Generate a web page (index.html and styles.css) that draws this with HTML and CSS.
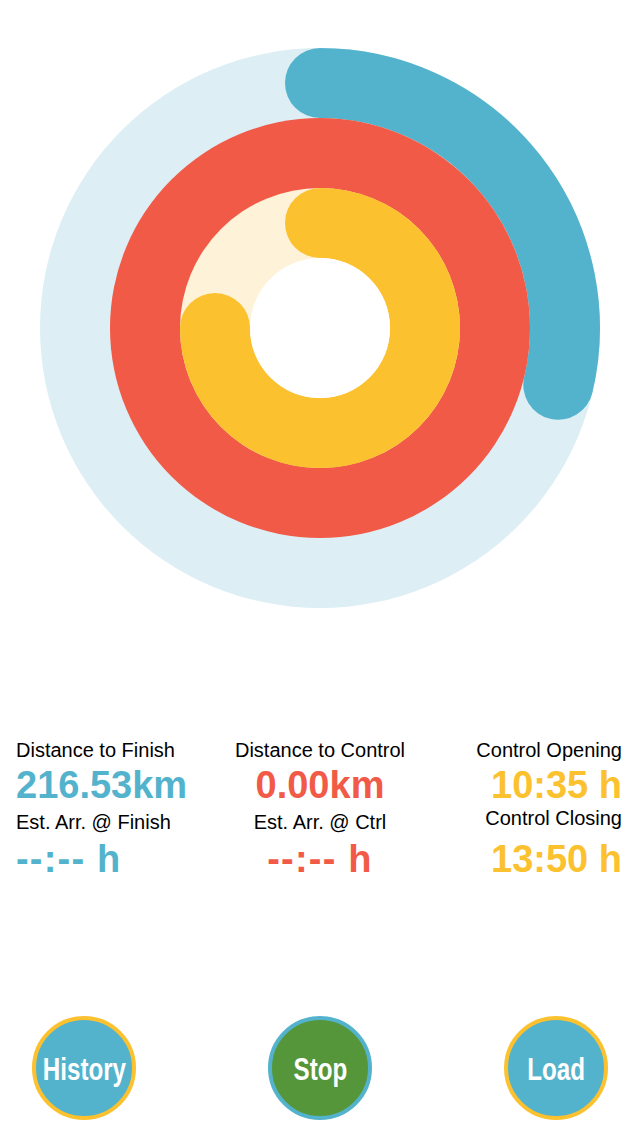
FILE: index.html
```html
<!DOCTYPE html>
<html>
<head>
<meta charset="utf-8">
<link rel="stylesheet" href="styles.css">
</head>
<body>
<div class="screen">
  <svg class="rings" width="640" height="656" viewBox="0 0 640 656">
    <circle cx="320" cy="328" r="280" fill="#DDEFF5"/>
    <path d="M 320 83 A 245 245 0 0 1 558.3 384.8" fill="none" stroke="#54B3CC" stroke-width="70" stroke-linecap="round"/>
    <circle cx="320" cy="328" r="210" fill="#F25A48"/>
    <circle cx="320" cy="328" r="140" fill="#FEF2D8"/>
    <path d="M 320 223 A 105 105 0 1 1 215 328" fill="none" stroke="#FBC12F" stroke-width="70" stroke-linecap="round"/>
    <circle cx="320" cy="328" r="70" fill="#FFFFFF"/>
  </svg>

  <div class="stats">
    <div class="col col-left">
      <div class="label">Distance to Finish</div>
      <div class="value blue">216.53km</div>
      <div class="label label2">Est. Arr. @ Finish</div>
      <div class="value value2 dashes blue">--:-- h</div>
    </div>
    <div class="col col-mid">
      <div class="label">Distance to Control</div>
      <div class="value red">0.00km</div>
      <div class="label label2">Est. Arr. @ Ctrl</div>
      <div class="value value2 dashes red">--:-- h</div>
    </div>
    <div class="col col-right">
      <div class="label">Control Opening</div>
      <div class="value yellow">10:35 h</div>
      <div class="label label2 label2-up">Control Closing</div>
      <div class="value value2 value2-down yellow">13:50 h</div>
    </div>
  </div>

  <div class="buttons">
    <div class="btn btn-blue ring-yellow"><span>History</span></div>
    <div class="btn btn-green ring-blue"><span>Stop</span></div>
    <div class="btn btn-blue ring-yellow"><span>Load</span></div>
  </div>
</div>
</body>
</html>
```

FILE: styles.css
```css
html, body {
  margin: 0;
  padding: 0;
  background: #ffffff;
}

.screen {
  width: 640px;
  height: 1136px;
  display: flex;
  flex-direction: column;
  font-family: "Liberation Sans", Arial, sans-serif;
  color: #000000;
}

.rings {
  display: block;
}

.stats {
  margin-top: 82px;
  display: grid;
  grid-template-columns: 1fr 1fr 1fr;
}

.col {
  display: flex;
  flex-direction: column;
}

.col-left {
  align-items: flex-start;
  padding-left: 16px;
}

.col-mid {
  align-items: center;
}

.col-right {
  align-items: flex-end;
  padding-right: 18px;
}

.label {
  font-size: 20px;
  line-height: 24px;
  white-space: nowrap;
}

.value {
  font-size: 38px;
  line-height: 44px;
  font-weight: bold;
  margin-top: 1px;
  white-space: nowrap;
}

.dashes {
  letter-spacing: 1.2px;
}

.label2 {
  margin-top: 3px;
}

.label2-up {
  margin-top: -1px;
}

.value2 {
  margin-top: 3px;
}

.value2-down {
  margin-top: 7px;
}

.blue { color: #54B3CC; }
.red { color: #F25A48; }
.yellow { color: #FBC12F; }

.buttons {
  margin-top: auto;
  margin-bottom: 16px;
  display: flex;
  justify-content: space-between;
  padding: 0 32px;
}

.btn {
  width: 104px;
  height: 104px;
  box-sizing: border-box;
  border-radius: 50%;
  border: 4px solid #FBC12F;
  display: flex;
  align-items: center;
  justify-content: center;
}

.btn span {
  display: inline-block;
  color: #ffffff;
  font-family: "Liberation Sans", Arial, sans-serif;
  font-weight: bold;
  font-size: 31px;
  margin-top: 3px;
  transform: scaleX(0.78);
  white-space: nowrap;
}

.btn-blue { background: #54B3CC; }
.btn-green { background: #55963A; }
.ring-yellow { border-color: #FBC12F; }
.ring-blue { border-color: #54B3CC; }
```
